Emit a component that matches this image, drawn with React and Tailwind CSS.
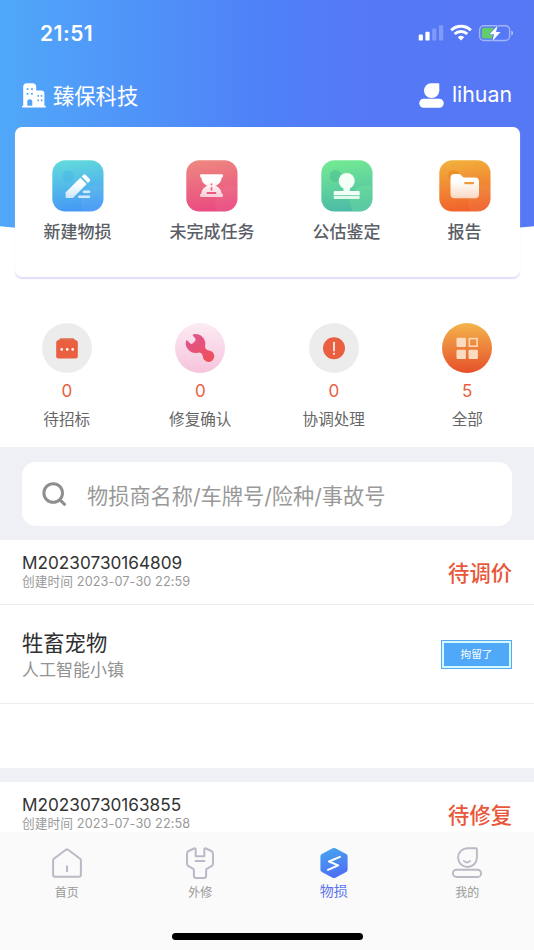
import React, { useState } from 'react';

const actions = [
  { label: '新建物损', icon: <NewIcon /> },
  { label: '未完成任务', icon: <PendingIcon /> },
  { label: '公估鉴定', icon: <StampIcon /> },
  { label: '报告', icon: <FolderIcon /> },
];

const stats = [
  { label: '待招标', count: 0, icon: <BidIcon /> },
  { label: '修复确认', count: 0, icon: <WrenchIcon /> },
  { label: '协调处理', count: 0, icon: <AlertIcon /> },
  { label: '全部', count: 5, icon: <AllIcon /> },
];

const orders = [
  {
    id: 'M20230730164809',
    created: '2023-07-30 22:59',
    status: '待调价',
    title: '牲畜宠物',
    place: '人工智能小镇',
    tag: '拘留了',
  },
  { id: 'M20230730163855', created: '2023-07-30 22:58', status: '待修复' },
];

const tabs = [
  { key: 'home', label: '首页', icon: <HomeTab /> },
  { key: 'repair', label: '外修', icon: <RepairTab /> },
  { key: 'damage', label: '物损', icon: <DamageTab /> },
  { key: 'me', label: '我的', icon: <MeTab /> },
];

// Иконки быстрых действий
function Tile({ id, from, to, children }) {
  return (
    <svg width="52" height="52" viewBox="0 0 52 52" className="block">
      <defs>
        <linearGradient id={id} x1="0" y1="0" x2="0.15" y2="1">
          <stop offset="0" stopColor={from} />
          <stop offset="1" stopColor={to} />
        </linearGradient>
        <linearGradient id={id + 'f'} x1="0" y1="0" x2="0" y2="1">
          <stop offset="0.3" stopColor="#fff" />
          <stop offset="1" stopColor="#fff" stopOpacity="0.7" />
        </linearGradient>
        <clipPath id={id + 'c'}>
          <rect x="0.3" y="0.3" width="51.2" height="51.2" rx="13" />
        </clipPath>
      </defs>
      <g clipPath={`url(#${id}c)`}>
        <rect width="52" height="52" fill={`url(#${id})`} />
        <circle cx="46" cy="42" r="17" fill="#fff" opacity="0.05" />
        {children}
      </g>
    </svg>
  );
}

function NewIcon() {
  return (
    <Tile id="new" from="#63dedb" to="#459af5">
      <circle cx="16" cy="16" r="5.5" fill="#3fb4e4" opacity="0.4" />
      <path d="M13.600 32.500 28.300 17.700l6.400 6.400L21 38h-6.400a1 1 0 0 1-1-1z" fill="url(#newf)" />
      <path d="m29.600 16.600 1.800-1.800a1.500 1.500 0 0 1 2.100 0l4.200 4.300a1.500 1.500 0 0 1 0 2.100L36 23z" fill="#fff" />
      <path d="M32 31.700h5M27.300 36.800h9.700" stroke="#fff" strokeOpacity="0.75" strokeWidth="2.6" strokeLinecap="round" />
    </Tile>
  );
}

function PendingIcon() {
  return (
    <Tile id="pending" from="#ee8a80" to="#ea4c80">
      <path
        d="M15 14.300h21a.9.900 0 0 1 .9.900v1.300a.9.900 0 0 1-.9.900h-.4c-.2 4.300-2.800 6.900-6.100 8.400 3.300 1.300 5.900 3.800 6.100 8h.4a.9.900 0 0 1 .9.900V36a.9.900 0 0 1-.9.900H15a.9.900 0 0 1-.9-.9v-1.300a.9.900 0 0 1 .9-.9h.4c.2-4.200 2.800-6.700 6.100-8-3.300-1.500-5.900-4.100-6.100-8.400H15a.9.900 0 0 1-.9-.9v-1.300a.9.900 0 0 1 .9-.9z"
        fill="url(#pendingf)"
      />
      <path d="M25.500 24v.6M25.500 27.800v2" stroke="#ec6681" strokeWidth="1.700" strokeLinecap="round" />
      <path d="M20.800 33h9.400" stroke="#ec5a80" strokeWidth="1.900" />
    </Tile>
  );
}

function StampIcon() {
  return (
    <Tile id="stamp" from="#76ec92" to="#4dbca6">
      <circle cx="14.500" cy="16" r="6" fill="#3bb38e" opacity="0.4" />
      <circle cx="46" cy="42" r="17" fill="#6dec8c" opacity="0.25" />
      <circle cx="25.700" cy="21" r="8" fill="#f4fff7" />
      <path d="M21.500 26.500h8.400c-.9 1.400-1.200 2.800-1 4.500h8.700a1.100 1.100 0 0 1 1.100 1.100v3.200h-26v-3.200a1.100 1.100 0 0 1 1.100-1.100h8.700c.2-1.700-.1-3.100-1-4.500z" fill="#f1fff5" />
      <path d="M12.700 35.900h26v2a1 1 0 0 1-1 1h-24a1 1 0 0 1-1-1z" fill="#e2faea" />
    </Tile>
  );
}

function FolderIcon() {
  return (
    <Tile id="folder" from="#f2b43c" to="#f0642b">
      <circle cx="14.500" cy="15.500" r="5.500" fill="#e8861f" opacity="0.6" />
      <path
        d="M15.500 14h4c1 0 1.800.4 2.500 1.100l1.600 1.600c.5.500 1.200.8 2 .8H36a4 4 0 0 1 4 4v12.800a4 4 0 0 1-4 4H15.500a4 4 0 0 1-4-4V18a4 4 0 0 1 4-4z"
        fill="url(#folderf)"
      />
      <path d="M26.300 23.200h7.700" stroke="#f19a3c" strokeWidth="2.200" strokeLinecap="round" />
    </Tile>
  );
}

// Иконки счётчиков
function BidIcon() {
  return (
    <svg width="50" height="50" viewBox="0 0 50 50">
      <circle cx="25" cy="25" r="25" fill="#ececec" />
      <path d="M18.500 15.300h13l3 3h-19z" fill="#df6d50" />
      <rect x="14.200" y="17.200" width="21.600" height="18.300" rx="2.200" fill="#ea5f40" />
      <g fill="#fff">
        <circle cx="19.700" cy="26.400" r="1.300" />
        <circle cx="25.200" cy="26.400" r="1.300" />
        <circle cx="30.700" cy="26.400" r="1.300" />
      </g>
    </svg>
  );
}

function WrenchIcon() {
  return (
    <svg width="50" height="50" viewBox="0 0 50 50">
      <defs>
        <linearGradient id="pinkBg" x1="0" y1="0" x2="0" y2="1">
          <stop offset="0" stopColor="#fcebf3" />
          <stop offset="1" stopColor="#f6c3dc" />
        </linearGradient>
        <linearGradient id="pinkFg" x1="0" y1="0" x2="0.7" y2="1">
          <stop offset="0" stopColor="#de5595" />
          <stop offset="1" stopColor="#ee4f5c" />
        </linearGradient>
      </defs>
      <circle cx="25" cy="25" r="25" fill="url(#pinkBg)" />
      <path
        d="M18.600 11.300A9.800 9.800 0 0 1 30 23.600q.2 3.200 3.700 3.900A5.700 5.700 0 1 1 27.900 33.400q-.6-3.900-4.200-4A9.800 9.800 0 0 1 11 18q.3-1.100 1.200-.4l3.200 2.800q1.200 1 2.400-.1l2.300-2.200q1.200-1.200.2-2.500l-2.500-3.100q-.6-.9.800-1.200z"
        fill="url(#pinkFg)"
      />
    </svg>
  );
}

function AlertIcon() {
  return (
    <svg width="50" height="50" viewBox="0 0 50 50">
      <circle cx="25" cy="25" r="25" fill="#ececec" />
      <circle cx="25" cy="25.300" r="11" fill="#ea5f40" />
      <path d="M25 19.500v8.300" stroke="#fff" strokeWidth="1.600" strokeLinecap="round" />
      <circle cx="25" cy="30.700" r="1" fill="#fff" />
    </svg>
  );
}

function AllIcon() {
  return (
    <svg width="50" height="50" viewBox="0 0 50 50">
      <defs>
        <linearGradient id="allBg" x1="0" y1="0" x2="0" y2="1">
          <stop offset="0" stopColor="#f3b44c" />
          <stop offset="1" stopColor="#e6502a" />
        </linearGradient>
      </defs>
      <circle cx="25" cy="25" r="25" fill="url(#allBg)" />
      <g fill="#fbdcc0">
        <rect x="14.500" y="14.800" width="9.400" height="9.200" rx="1.200" />
        <rect x="14.500" y="26.700" width="9.400" height="9.200" rx="1.200" />
        <rect x="26.500" y="26.700" width="9.400" height="9.200" rx="1.200" />
      </g>
      <rect x="27.300" y="15.600" width="7.800" height="7.600" fill="none" stroke="#fbdcc0" strokeWidth="1.500" />
    </svg>
  );
}

// Иконки нижнего меню
function HomeTab() {
  return (
    <svg width="32" height="32" viewBox="0 0 32 32" fill="none" stroke="#b9bac6" strokeWidth="2" strokeLinejoin="round">
      <path d="M14.900 2.800a1.800 1.800 0 0 1 2.200 0l12 9c.5.400.8 1 .8 1.600v14.300a2 2 0 0 1-2 2H4.100a2 2 0 0 1-2-2V13.400c0-.6.300-1.200.8-1.600z" />
      <path d="M16 18.500v6.500" />
    </svg>
  );
}

function RepairTab() {
  return (
    <svg width="32" height="32" viewBox="0 0 32 32" fill="none" stroke="#b9bac6" strokeWidth="2" strokeLinejoin="round" strokeLinecap="round">
      <path d="M11.700 2.600a1.200 1.200 0 0 0-1.700-1.100L4.700 4A3 3 0 0 0 3 6.700v9.800c0 1.100.6 2.100 1.500 2.600l4.400 2.600c.7.400 1 1 1 1.700v5.600a2 2 0 0 0 2 2h8.200a2 2 0 0 0 2-2v-5.600c0-.7.400-1.300 1-1.700l4.400-2.600c1-.5 1.500-1.500 1.500-2.600V6.700A3 3 0 0 0 27.300 4L22 1.500a1.200 1.200 0 0 0-1.700 1.100v6.700h-8.600z" />
      <path d="M11.500 14h9" />
    </svg>
  );
}

function DamageTab() {
  return (
    <svg width="32" height="32" viewBox="0 0 32 32">
      <defs>
        <linearGradient id="hex" x1="0.3" y1="0" x2="0.6" y2="1">
          <stop offset="0" stopColor="#46a4ee" />
          <stop offset="1" stopColor="#4f6cf6" />
        </linearGradient>
      </defs>
      <path
        d="M14.600 1.300a3 3 0 0 1 2.800 0l10.800 5.800A2.700 2.700 0 0 1 29.600 9.500v13a2.700 2.700 0 0 1-1.400 2.400l-10.800 5.800a3 3 0 0 1-2.800 0L3.800 24.900a2.700 2.700 0 0 1-1.400-2.400v-13a2.700 2.700 0 0 1 1.400-2.400z"
        fill="url(#hex)"
      />
      <path d="m22 9.800-11 4.700 9.200 3.800-10.200 4.500" fill="none" stroke="#fff" strokeWidth="2" strokeLinecap="round" strokeLinejoin="round" />
    </svg>
  );
}

function MeTab() {
  return (
    <svg width="32" height="32" viewBox="0 0 32 32" fill="none" stroke="#b9bac6" strokeWidth="1.900" strokeLinecap="round" strokeLinejoin="round">
      <path d="M16 1.200h8.700a1.200 1.200 0 0 1 1.200 1.200v8.300A9.400 9.400 0 1 1 16 1.200z" />
      <path d="M12.900 14c1.600 1.900 4.600 1.900 6.200 0" />
      <rect x="1.900" y="22.700" width="28.200" height="7.300" rx="3.600" />
    </svg>
  );
}

function StatusBar() {
  return (
    <div className="flex h-[66px] items-center justify-between pl-10 pr-5">
      <span className="text-[21px] font-semibold leading-none tracking-[0.5px]">21:51</span>
      <svg width="96" height="18" viewBox="0 0 96 18" fill="#fff">
        <rect x="0.700" y="10.600" width="4.200" height="6" rx="1.200" />
        <rect x="7.400" y="7.700" width="4.200" height="8.900" rx="1.200" />
        <rect x="14.200" y="4.500" width="4.200" height="12.100" rx="1.200" opacity="0.25" />
        <rect x="21" y="1.200" width="4.200" height="15.400" rx="1.200" opacity="0.25" />
        <g fill="none" stroke="#fff" strokeWidth="3">
          <path d="M33.200 6.200a14 14 0 0 1 19.600 0" />
          <path d="M36.700 10a9 9 0 0 1 12.600 0" />
        </g>
        <path d="m43 16.600-3.200-3.400a4.700 4.700 0 0 1 6.400 0z" />
        <rect x="61.600" y="1.700" width="30" height="14.800" rx="4.300" fill="none" stroke="#fff" strokeOpacity="0.45" strokeWidth="1.400" />
        <path d="M93.300 6.600c2.400.9 2.400 4 0 4.900z" opacity="0.5" />
        <path d="M65.800 3.800h10.500l-4 6h3l-1.500 4.700h-8a2 2 0 0 1-2-2V5.800a2 2 0 0 1 2-2z" fill="#62cd6a" />
        <path d="m79.700 1.500-8.200 8.700h4.600l-1.700 6.700 8.200-8.900H78z" stroke="#547cf6" strokeWidth="1" paintOrder="stroke" />
      </svg>
    </div>
  );
}

function Header() {
  return (
    <div className="flex h-[127px] flex-col text-white">
      <StatusBar />
      <div className="flex h-[58px] items-center justify-between px-[22px]">
        <div className="flex items-center gap-[7px]">
          <svg width="24" height="25" viewBox="0 0 24 25" fill="#fff" fillRule="evenodd">
            <path d="M1.200 3.800A3.600 3.600 0 0 1 4.800.300h5.800a3.600 3.600 0 0 1 3.600 3.500v3.700h5.200a3 3 0 0 1 3 3v12.300h.6a.9.900 0 0 1 0 1.800H.8a.9.900 0 0 1 0-1.800h.4zM4.700 5.200v1.800h1.700V5.200zm4.400 0v1.800h1.700V5.200zM4.700 10v1.800h1.700V10zm4.400 0v1.800h1.700V10zM5.300 22.800h5v-4a2.500 2.500 0 0 0-5 0zM15.500 12v1.700h1.500v-1.700zm3.300 0v1.700h1.500v-1.700zm-3.300 4.500v1.700h1.500v-1.700zm3.300 0v1.700h1.500v-1.700z" />
          </svg>
          <span className="pt-[3px] text-[21.300px] leading-none">臻保科技</span>
        </div>
        <div className="flex items-center gap-2">
          <svg width="25" height="25" viewBox="0 0 25 25" fill="#fff">
            <path d="M12.200.2h7c.7 0 1.100.4 1.100 1.100v6.500a7.500 7.500 0 0 1-7.700 7.200 7.400 7.400 0 0 1-.4-14.800z" />
            <rect x="0.300" y="15.800" width="24.400" height="8.900" rx="4.400" />
          </svg>
          <span className="text-[21.300px] leading-none">lihuan</span>
        </div>
      </div>
    </div>
  );
}

function OrderCard({ order }) {
  return (
    <div className="bg-white">
      <div className="flex h-[65px] items-center justify-between border-b border-[#ededed] px-[22px]">
        <div className="pb-[2px]">
          <p className="text-[17.200px] leading-[20px] text-[#333]">{order.id}</p>
          <p className="text-[12.700px] leading-[17px] tracking-[0.1px] text-[#999]">创建时间 {order.created}</p>
        </div>
        <span className="pt-[3px] text-[21.300px] font-medium leading-none text-[#e9573a]">{order.status}</span>
      </div>
      {order.title && (
        <>
          <div className="flex h-[99px] items-center justify-between border-b border-[#ededed] px-[22px]">
            <div className="pt-[4px]">
              <p className="text-[21.300px] leading-[29px] text-[#303030]">{order.title}</p>
              <p className="text-[17px] leading-[25px] text-[#929292]">{order.place}</p>
            </div>
            <div className="h-[29px] w-[71px] border border-[#58a9ee] bg-[#d3fbff] p-[2px]">
              <div className="flex h-full items-center justify-center bg-[#50a8f8] pt-[3px] text-[10.700px] leading-none text-white">
                {order.tag}
              </div>
            </div>
          </div>
          <div className="h-[64px]" />
        </>
      )}
    </div>
  );
}

export default function App() {
  const [active, setActive] = useState('damage');
  const [query, setQuery] = useState('');

  return (
    <div className="flex h-[950px] w-[534px] flex-col overflow-hidden bg-white font-['Inter','Noto_Sans_CJK_SC',sans-serif]">
      {/* Шапка с изогнутым фоном и карточкой действий */}
      <div className="grid h-[300px] shrink-0 grid-cols-1">
        <div className="col-start-1 row-start-1 h-[237px] overflow-hidden">
          <div className="-mx-[107px] h-[237px] rounded-b-[50%_36px] bg-[linear-gradient(90deg,#50a8f9_14.300%,#4f80f8_50%,#5578f6_64%,#5678f5_86%)]" />
        </div>
        <div className="col-start-1 row-start-1">
          <Header />
          <div className="mx-[14.500px] flex h-[150px] justify-around rounded-[7px] bg-white pt-[33px] shadow-[0_2px_1px_#dfdffb]">
            {actions.map(a => (
              <button key={a.label} className="flex flex-col items-center gap-[8px]">
                {a.icon}
                <span className="text-[17px] font-medium leading-[24px] text-[#5b5e66]">{a.label}</span>
              </button>
            ))}
          </div>
        </div>
      </div>

      <div className="grid h-[147px] shrink-0 grid-cols-4 pt-[23px]">
        {stats.map(s => (
          <div key={s.label} className="flex flex-col items-center">
            {s.icon}
            <span className="mt-[7px] text-[17px] leading-[22px] text-[#e9603f]">{s.count}</span>
            <span className="mt-[6px] text-[15.600px] leading-[24px] text-[#666]">{s.label}</span>
          </div>
        ))}
      </div>

      <div className="h-[93px] shrink-0 bg-[#eff0f6] px-[22px] pt-[15px]">
        <div className="flex h-[64px] items-center gap-5 rounded-[14px] bg-white px-5">
          <svg width="25" height="25" viewBox="0 0 25 25" fill="none" stroke="#8f8f8f" strokeWidth="3">
            <circle cx="11.200" cy="11" r="9.300" />
            <path d="m17.800 17.600 5.600 5.600" />
          </svg>
          <input
            value={query}
            onChange={e => setQuery(e.target.value)}
            placeholder="物损商名称/车牌号/险种/事故号"
            className="min-w-0 flex-1 pt-[6px] text-[21.200px] outline-none placeholder:text-[#999]"
          />
        </div>
      </div>

      <div className="flex min-h-0 flex-1 flex-col gap-[14px] overflow-hidden bg-[#eff0f6]">
        {orders.map(o => (
          <OrderCard key={o.id} order={o} />
        ))}
      </div>

      <div className="flex h-[118px] shrink-0 flex-col items-center justify-between bg-[#fafafa] pb-[10px] pt-[15px]">
        <div className="grid w-full grid-cols-4">
          {tabs.map(t => (
            <button key={t.key} onClick={() => setActive(t.key)} className="flex flex-col items-center gap-[2px]">
              {t.icon}
              <span className={active === t.key ? 'text-[14px] leading-[20px] text-[#5b74ee]' : 'text-[12px] leading-[23px] text-[#999]'}>
                {t.label}
              </span>
            </button>
          ))}
        </div>
        <div className="h-[7px] w-[191px] rounded-full bg-black" />
      </div>
    </div>
  );
}
